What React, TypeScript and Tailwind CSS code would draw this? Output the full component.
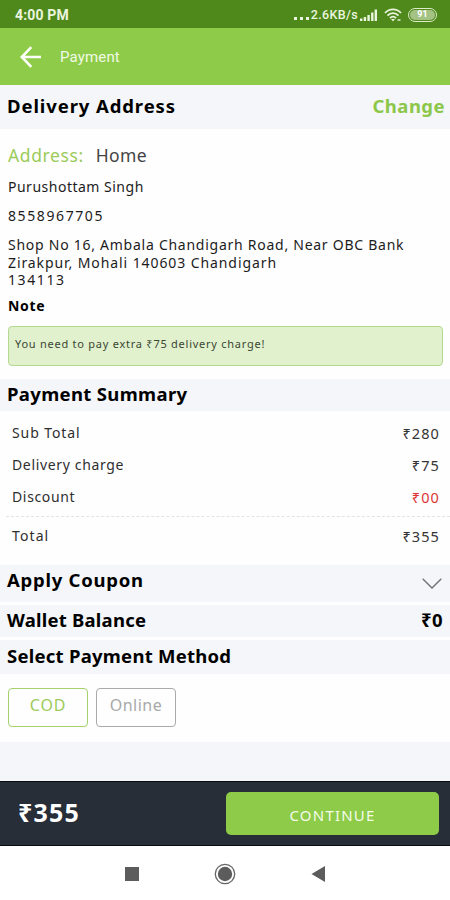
import React from "react";

type SummaryRowProps = {
  label: string;
  value: string;
  className?: string;
  labelClass?: string;
  valueClass?: string;
};

function SummaryRow({ label, value, className = "h-8", labelClass = "tracking-[0.65px]", valueClass = "text-[#333]" }: SummaryRowProps) {
  return (
    <div className={`flex items-center justify-between pl-3 pr-[10px] text-[14px] leading-none ${className}`}>
      <span className={`text-[#2e2e2e] ${labelClass}`}>{label}</span>
      <span className={`text-[14.5px] tracking-[1.1px] ${valueClass}`}>{value}</span>
    </div>
  );
}

type SectionBarProps = { title: string; className: string; titleClass: string; children?: React.ReactNode };

function SectionBar({ title, className, titleClass, children }: SectionBarProps) {
  return (
    <div className={`flex items-center justify-between bg-[#f4f6fa] pl-[7px] text-[18.5px] font-bold leading-none text-black ${className}`}>
      <h2 className={`whitespace-nowrap ${titleClass}`}>{title}</h2>
      {children}
    </div>
  );
}

function StatusBar() {
  return (
    <div className="flex h-7 items-center justify-between bg-[#4f881b] pl-[15px] pr-[13px] pt-px font-['Roboto',sans-serif] text-[#eaf5df]">
      <span className="text-[14px] font-bold leading-none tracking-[0.15px]">4:00 PM</span>
      <div className="flex items-center">
        <span className="mr-[2px] flex gap-[3px] pt-[7px]">
          <i className="size-[3px] bg-current" />
          <i className="size-[3px] bg-current" />
          <i className="size-[3px] bg-current" />
        </span>
        <span className="pt-px text-[12.5px] font-medium leading-none tracking-[0.35px]">2.6KB/s</span>
        <svg className="ml-[2px]" width="17" height="12" viewBox="0 0 17 12" fill="currentColor">
          <rect x="0" y="9.5" width="2.4" height="2.5" />
          <rect x="3.7" y="8" width="2.4" height="4" />
          <rect x="7.4" y="6" width="2.4" height="6" />
          <rect x="11.1" y="3.5" width="2.4" height="8.5" />
          <rect x="14.6" y="0.5" width="2.4" height="11.5" />
        </svg>
        <svg className="ml-[7px]" width="18" height="14" viewBox="0 0 18 14" fill="none" stroke="currentColor" strokeWidth="1.8">
          <path d="M1 5 C5.5 0.2 12.5 0.2 17 5" />
          <path d="M3.5 7.6 C6.5 4.4 11.5 4.4 14.5 7.6" />
          <path d="M6 10.2 C7.8 8.2 10.2 8.2 12 10.2" />
          <path d="M7 11 L9 13.4 L11 11 Z" fill="currentColor" stroke="none" />
          <rect x="13.5" y="11" width="3" height="2" fill="currentColor" fillOpacity="0.7" stroke="none" />
        </svg>
        <span className="ml-[6px] flex h-[14px] w-[29px] items-center justify-center rounded-full border border-[#dcecc9] p-px">
          <span className="flex h-full w-full items-center justify-center rounded-full bg-[#a3c283] text-[9px] font-bold leading-none text-white">91</span>
        </span>
      </div>
    </div>
  );
}

export default function App() {
  return (
    <div className="flex h-[900px] w-[450px] flex-col overflow-hidden bg-[#fefefe] font-['Noto_Sans','Open_Sans',sans-serif]">
      <StatusBar />
      <header className="flex h-[57px] items-center bg-[#8dcb48] pl-5 font-['Roboto',sans-serif]">
        <svg width="21" height="22" viewBox="0 0 21 22" fill="none" stroke="#fdfff8" strokeWidth="2.6">
          <path d="M21 11 H2 M11.3 1.2 L1.8 11 L11.3 20.8" />
        </svg>
        <h1 className="ml-[19px] pt-[2px] text-[15px] leading-none tracking-[0.15px] text-[#f1fae5]">Payment</h1>
      </header>

      <SectionBar title="Delivery Address" className="h-11 pb-[2px] pr-[5px]" titleClass="tracking-[0.9px]">
        <button className="tracking-[0.45px] text-[#8dc74a]">Change</button>
      </SectionBar>

      <section className="flex h-[250px] flex-col pl-2 pr-[7px] text-[14px] text-[#1c1c1c]">
        <p className="mt-[16px] flex text-[17.5px] leading-5">
          <span className="tracking-[0.6px] text-[#9ccb5b]">Address:</span>
          <span className="ml-[12px] tracking-[0.4px] text-[#444]">Home</span>
        </p>
        <p className="mt-[13px] leading-[18px] tracking-[0.5px]">Purushottam Singh</p>
        <p className="mt-[11px] leading-[18px] tracking-[1.6px]">8558967705</p>
        <p className="mt-[11px] whitespace-nowrap leading-[17.6px]">
          <span className="block tracking-[0.74px]">Shop No 16, Ambala Chandigarh Road, Near OBC Bank</span>
          <span className="block tracking-[0.91px]">Zirakpur, Mohali 140603 Chandigarh</span>
          <span className="block tracking-[1.6px]">134113</span>
        </p>
        <p className="mt-[8px] font-bold leading-[18px] tracking-[0.7px] text-black">Note</p>
        <div className="mt-[11px] flex h-10 items-center rounded-[4px] border-[1.5px] border-[#b4d88d] bg-[#e1f1ce] pb-[4px] pl-[6px] text-[11px] leading-none tracking-[0.75px] text-[#3c4632]">
          You need to pay extra ₹75 delivery charge!
        </div>
      </section>

      <SectionBar title="Payment Summary" className="h-8 pb-[2px]" titleClass="tracking-[0.34px]" />

      <section className="h-[154px] pt-[6px]">
        <SummaryRow label="Sub Total" value="₹280" labelClass="tracking-[0.9px]" />
        <SummaryRow label="Delivery charge" value="₹75" />
        <SummaryRow label="Discount" value="₹00" valueClass="text-[#dd3434]" />
        <div className="ml-[6px] mt-[3px] border-t border-dashed border-[#e3e3e3]" />
        <SummaryRow label="Total" value="₹355" className="h-[38px]" labelClass="tracking-[1.1px]" />
      </section>

      <SectionBar title="Apply Coupon" className="h-[37px] pb-[6px] pr-2" titleClass="tracking-[0.75px]">
        <svg className="mt-[5px]" width="20" height="11" viewBox="0 0 20 11" fill="none" stroke="#777" strokeWidth="1.5">
          <path d="M0.7 0.7 L10 10 L19.3 0.7" />
        </svg>
      </SectionBar>
      <SectionBar title="Wallet Balance" className="mt-[3px] h-8 pb-[2px] pr-[7px]" titleClass="tracking-[0.22px]">
        <span className="tracking-[0.4px]">₹0</span>
      </SectionBar>
      <SectionBar title="Select Payment Method" className="mt-[3px] h-[34px] pb-[2px]" titleClass="tracking-[0.25px]" />

      <section className="flex h-[68px] gap-2 pl-2 pt-[14px] text-[16px] leading-none">
        <button className="h-[39px] w-20 rounded-[4px] border-[1.5px] border-[#a5d16b] pb-[6px] tracking-[0.8px] text-[#9ccb5b]">COD</button>
        <button className="h-[39px] w-20 rounded-[4px] border-[1.5px] border-[#aaaaaa] pb-[6px] tracking-[0.5px] text-[#a9a9a9]">Online</button>
      </section>
      <div className="h-[39px] bg-[#f4f6fa]" />

      <footer className="flex h-[65px] items-center justify-between border-y border-[#080c12] bg-[#272e38] pl-[18px] pr-[11px]">
        <strong className="pb-[3px] text-[25px] leading-none tracking-[1.2px] text-white">₹355</strong>
        <button className="h-[43px] w-[213px] rounded-[5px] bg-[#8dcb48] pt-[4px] text-[15px] leading-none tracking-[1.2px] text-[#f4fbe9]">CONTINUE</button>
      </footer>

      <nav className="flex h-[54px] items-center justify-center gap-[75px] bg-white pr-px pt-[2px]">
        <span className="size-[14px] bg-[#5c5c5c]" />
        <svg width="22" height="22" viewBox="0 0 22 22">
          <circle cx="11" cy="11" r="9.7" fill="white" stroke="#666" strokeWidth="1.3" />
          <circle cx="11" cy="11" r="7.2" fill="#5c5c5c" />
        </svg>
        <svg width="14" height="16" viewBox="0 0 14 16">
          <path d="M14 0 V16 L0.5 8 Z" fill="#5c5c5c" />
        </svg>
      </nav>
    </div>
  );
}
